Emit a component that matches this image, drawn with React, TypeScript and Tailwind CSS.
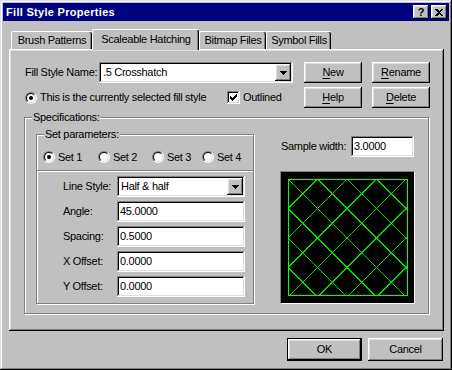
import React from "react";

const raised =
  "shadow-[inset_-1px_-1px_0_#000,inset_1px_1px_0_#fff,inset_-2px_-2px_0_#808080,inset_2px_2px_0_#dfdfdf]";
const sunken =
  "shadow-[inset_-1px_-1px_0_#fff,inset_1px_1px_0_#808080,inset_-2px_-2px_0_#dfdfdf,inset_2px_2px_0_#000]";

function Btn({ children, className = "" }: { children: React.ReactNode; className?: string }) {
  return (
    <div className={`${raised} h-[21px] flex items-center justify-center bg-[#c0c0c0] ${className}`}>
      {children}
    </div>
  );
}

function U({ children }: { children: React.ReactNode }) {
  return <span className="underline underline-offset-[2px]">{children}</span>;
}

function Edit({ value, className = "" }: { value: string; className?: string }) {
  return (
    <div className={`${sunken} bg-white h-[21px] flex items-center pl-[3px] ${className}`}>{value}</div>
  );
}

function Arrow() {
  return (
    <svg width="7" height="4" viewBox="0 0 7 4" shapeRendering="crispEdges">
      <polygon points="0,0 7,0 3.5,4" fill="#000" />
    </svg>
  );
}

function Combo({ value, className = "" }: { value: string; className?: string }) {
  return (
    <div className={`${sunken} bg-white h-[21px] flex items-stretch p-[2px] ${className}`}>
      <div className="flex-1 flex items-center pl-[2px]">{value}</div>
      <div className={`${raised} w-[16px] bg-[#c0c0c0] flex items-center justify-center`}>
        <Arrow />
      </div>
    </div>
  );
}

function Radio({ checked }: { checked?: boolean }) {
  return (
    <div className="w-[12px] h-[12px] rounded-full border border-t-[#808080] border-l-[#808080] border-b-white border-r-white shrink-0">
      <div className="w-full h-full rounded-full border border-t-black border-l-black border-b-[#dfdfdf] border-r-[#dfdfdf] bg-white flex items-center justify-center">
        {checked && <div className="w-[4px] h-[4px] rounded-full bg-black" />}
      </div>
    </div>
  );
}

function Check() {
  return (
    <div className={`${sunken} w-[13px] h-[13px] bg-white flex items-center justify-center shrink-0`}>
      <svg width="7" height="7" viewBox="0 0 7 7" shapeRendering="crispEdges">
        <polygon points="0,2 2,4 7,-1 7,2 2,7 0,5" fill="#000" />
      </svg>
    </div>
  );
}

function Hatch() {
  const W = 120;
  const H = 117;
  const s = 29.5;
  const lines: React.ReactNode[] = [];
  for (let k = -4; k <= 4; k++) {
    const c = k * s;
    lines.push(<line key={"a" + k} x1={c} y1={0} x2={c + H} y2={H} />);
  }
  for (let k = 0; k <= 8; k++) {
    const c = k * s;
    lines.push(<line key={"b" + k} x1={c} y1={0} x2={c - H} y2={H} />);
  }
  return (
    <svg width={W} height={H} viewBox={`0 0 ${W} ${H}`} shapeRendering="crispEdges">
      <defs>
        <clipPath id="hc">
          <rect x="0" y="0" width={W} height={H} />
        </clipPath>
      </defs>
      <g clipPath="url(#hc)" stroke="#00e000" strokeWidth="1">
        {lines}
      </g>
      <rect x="0.5" y="0.5" width={W - 1} height={H - 1} fill="none" stroke="#00ff00" strokeWidth="1" />
    </svg>
  );
}

const etched = "border border-[#808080] shadow-[inset_1px_1px_0_#fff,1px_1px_0_#fff]";

export default function App() {
  return (
    <div className="w-[452px] h-[370px] bg-[#c0c0c0] p-[3px] font-['Liberation_Sans',Arial,sans-serif] text-[11px] leading-[13px] tracking-[-0.3px] whitespace-nowrap text-black shadow-[inset_-1px_-1px_0_#000,inset_1px_1px_0_#dfdfdf,inset_-2px_-2px_0_#808080,inset_2px_2px_0_#fff] select-none">
      {/* Title bar */}
      <div className="h-[18px] bg-[#000080] flex items-center pl-[3px] pr-[2px]">
        <div className="text-white font-bold flex-1 tracking-[0.3px]">Fill Style Properties</div>
        <div className={`${raised} w-[16px] h-[14px] bg-[#c0c0c0] flex items-center justify-center font-bold text-[11px] leading-none`}>
          ?
        </div>
        <div className={`${raised} w-[16px] h-[14px] bg-[#c0c0c0] flex items-center justify-center ml-[2px]`}>
          <svg width="8" height="7" viewBox="0 0 8 7" shapeRendering="crispEdges">
            <path d="M0 0h2l2 2 2-2h2L5 3.5 8 7H6L4 5 2 7H0l3-3.5z" fill="#000" />
          </svg>
        </div>
      </div>

      {/* Tabs */}
      <div className="mt-[8px] ml-[6px] h-[20px] flex items-end pl-[2px]">
        <div className="w-[81px] h-[18px] border-t border-l border-white rounded-tl-[2px] rounded-tr-[2px] shadow-[inset_-1px_0_0_#000,inset_-2px_0_0_#808080] flex items-center justify-center">
          Brush Patterns
        </div>
        <div className="relative z-10 w-[107px] h-[21px] -mb-[1px] bg-[#c0c0c0] border-t border-l border-white rounded-tl-[2px] rounded-tr-[2px] shadow-[inset_-1px_0_0_#000,inset_-2px_0_0_#808080] flex items-start justify-center pt-[3px]">
          Scaleable Hatching
        </div>
        <div className="w-[67px] h-[18px] border-t border-l border-white rounded-tl-[2px] rounded-tr-[2px] shadow-[inset_-1px_0_0_#000,inset_-2px_0_0_#808080] flex items-center justify-center">
          Bitmap Files
        </div>
        <div className="w-[65px] h-[18px] border-t border-l border-white rounded-tl-[2px] rounded-tr-[2px] shadow-[inset_-1px_0_0_#000,inset_-2px_0_0_#808080] flex items-center justify-center">
          Symbol Fills
        </div>
      </div>

      {/* Panel */}
      <div className={`${raised} ml-[6px] w-[435px] h-[282px] pt-[13px] pl-[15px]`}>
        {/* Row 1 */}
        <div className="ml-[1px] h-[21px] flex items-center">
          <div className="w-[74px]">Fill Style Name:</div>
          <Combo value=".5 Crosshatch" className="w-[194px]" />
          <Btn className="ml-[11px] w-[58px]">
            <span>
              <U>N</U>ew
            </span>
          </Btn>
          <Btn className="ml-[10px] w-[58px]">
            <span>
              <U>R</U>ename
            </span>
          </Btn>
        </div>
        {/* Row 2 */}
        <div className="ml-[1px] mt-[4px] h-[21px] flex items-center">
          <div className="w-[202px] flex items-center">
            <Radio checked />
            <span className="ml-[3px]">This is the currently selected fill style</span>
          </div>
          <div className="w-[77px] flex items-center">
            <Check />
            <span className="ml-[3px]">Outlined</span>
          </div>
          <Btn className="w-[58px]">
            <span>
              <U>H</U>elp
            </span>
          </Btn>
          <Btn className="ml-[10px] w-[58px]">
            <span>
              <U>D</U>elete
            </span>
          </Btn>
        </div>

        {/* Specifications */}
        <div className={`${etched} relative mt-[9px] w-[405px] h-[197px] flex pl-[11px] pt-[16px]`}>
          <div className="absolute -top-[7px] left-[7px] px-[1px] bg-[#c0c0c0]">Specifications:</div>

          {/* Set parameters */}
          <div className={`${etched} relative w-[218px] h-[170px] flex flex-col`}>
            <div className="absolute -top-[7px] left-[7px] px-[1px] bg-[#c0c0c0]">Set parameters:</div>
            <div className="mt-[14px] h-[16px] flex items-center pl-[6px]">
              <div className="w-[55px] flex items-center">
                <Radio checked />
                <span className="ml-[3px]">Set 1</span>
              </div>
              <div className="w-[54px] flex items-center">
                <Radio />
                <span className="ml-[3px]">Set 2</span>
              </div>
              <div className="w-[50px] flex items-center">
                <Radio />
                <span className="ml-[3px]">Set 3</span>
              </div>
              <div className="flex items-center">
                <Radio />
                <span className="ml-[3px]">Set 4</span>
              </div>
            </div>
            <div className="mt-[5px] h-[2px] border-t border-[#808080] border-b border-b-white" />
            <div className="pl-[26px] pt-[4px] flex flex-col gap-[4px]">
              <div className="h-[21px] flex items-center">
                <div className="w-[54px]">Line Style:</div>
                <Combo value="Half & half" className="w-[128px]" />
              </div>
              <div className="h-[21px] flex items-center">
                <div className="w-[54px]">Angle:</div>
                <Edit value="45.0000" className="w-[128px]" />
              </div>
              <div className="h-[21px] flex items-center">
                <div className="w-[54px]">Spacing:</div>
                <Edit value="0.5000" className="w-[128px]" />
              </div>
              <div className="h-[21px] flex items-center">
                <div className="w-[54px]">X Offset:</div>
                <Edit value="0.0000" className="w-[128px]" />
              </div>
              <div className="h-[21px] flex items-center">
                <div className="w-[54px]">Y Offset:</div>
                <Edit value="0.0000" className="w-[128px]" />
              </div>
            </div>
          </div>

          {/* Right column */}
          <div className="ml-[26px] flex flex-col">
            <div className="mt-[2px] h-[21px] flex items-center">
              <div className="w-[71px] pl-[1px]">Sample width:</div>
              <Edit value="3.0000" className="w-[63px]" />
            </div>
            <div className="mt-[14px] w-[135px] h-[133px] bg-black border border-t-[#808080] border-l-[#808080] border-b-white border-r-white pl-[7px] pt-[7px]">
              <Hatch />
            </div>
          </div>
        </div>
      </div>

      {/* Bottom buttons */}
      <div className="mt-[7px] flex justify-end pr-[6px]">
        <div className="border border-black">
          <Btn className="w-[73px] h-[21px]">OK</Btn>
        </div>
        <Btn className="ml-[6px] w-[75px] h-[23px]">Cancel</Btn>
      </div>
    </div>
  );
}
